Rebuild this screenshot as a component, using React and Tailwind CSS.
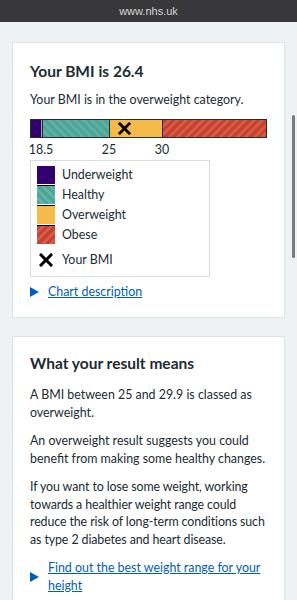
import React from 'react';

const swatches = [
  { label: 'Underweight', cls: 'bg-[#330072]' },
  { label: 'Healthy', cls: 'bg-[repeating-linear-gradient(45deg,#4ca597_0px,#4ca597_3px,#64b3a7_3px,#64b3a7_6px)]' },
  { label: 'Overweight', cls: 'bg-[#f5bb4a]' },
  { label: 'Obese', cls: 'bg-[repeating-linear-gradient(135deg,#c8402e_0px,#c8402e_3px,#d85c4b_3px,#d85c4b_6px)]' },
];

const Cross = ({ size = 14 }) => (
  <svg width={size} height={size} viewBox="0 0 14 14">
    <path d="M2 2 L12 12 M12 2 L2 12" stroke="#000" strokeWidth="3" strokeLinecap="square" />
  </svg>
);

const Triangle = () => (
  <svg width="9" height="10" viewBox="0 0 9 10" className="shrink-0">
    <path d="M0 0 L9 5 L0 10 Z" fill="#005eb8" />
  </svg>
);

const App = () => {
  return (
    <div className="relative min-h-[600px] bg-[#eef2f3] font-['Lato',sans-serif] text-[#212b32] overflow-hidden">
      <div className="h-[22px] bg-[#38383a] flex items-center justify-center text-[11px] text-[#d6d6d6] font-['Liberation_Sans',sans-serif]">
        www.nhs.uk
      </div>

      <div className="absolute left-[292px] top-[115px] w-[3px] h-[143px] rounded-full bg-[#7a7a7a]" />

      <div className="px-3 pt-[20px]">
        <div className="bg-white border border-[#dde2e4] px-[17px] pt-[17px] pb-[16px]">
          <h2 className="text-[15.5px] leading-[22px] font-bold">Your BMI is 26.4</h2>
          <p className="mt-[9px] text-[12.4px] leading-[18px]">Your BMI is in the overweight category.</p>

          <div className="mt-[10px] h-[19px] flex border border-[#2b2b2b]">
            <div className="w-[10px] bg-[#330072]" />
            <div className="w-[2px] bg-[#9aa0a3] border-r border-[#2b2b2b]" />
            <div className="w-[67px] border-r border-[#2b2b2b] bg-[repeating-linear-gradient(45deg,#4ca597_0px,#4ca597_3px,#5fb0a4_3px,#5fb0a4_6px)]" />
            <div className="relative w-[53px] border-r border-[#2b2b2b] bg-[#f5bb4a] flex items-center">
              <div className="absolute left-[8px]">
                <Cross size={13} />
              </div>
            </div>
            <div className="flex-1 bg-[repeating-linear-gradient(135deg,#c8402e_0px,#c8402e_3px,#d55a48_3px,#d55a48_6px)]" />
          </div>

          <div className="relative mt-[4px] h-[16px] text-[12.4px] leading-[16px]">
            <span className="absolute left-[11px] -translate-x-1/2">18.5</span>
            <span className="absolute left-[79px] -translate-x-1/2">25</span>
            <span className="absolute left-[132px] -translate-x-1/2">30</span>
          </div>

          <div className="mt-[2px] w-[180px] border border-[#d8dde0] pl-[6px] pt-[5px] pb-[7px]">
            {swatches.map((s, i) => (
              <div key={s.label} className={`flex items-center gap-[7px] ${i > 0 ? 'mt-[1px]' : ''}`}>
                <div className={`w-[18px] ${i > 0 ? 'h-[19px] border-t border-black' : 'h-[18px]'} ${s.cls}`} />
                <span className="text-[12.4px] leading-[18px]">{s.label}</span>
              </div>
            ))}
            <div className="mt-[7px] flex items-center gap-[7px]">
              <div className="w-[18px] flex justify-center">
                <Cross size={14} />
              </div>
              <span className="text-[12.4px] leading-[18px]">Your BMI</span>
            </div>
          </div>

          <div className="mt-[6px] flex items-center gap-[9px]">
            <Triangle />
            <a href="#" className="text-[12.4px] leading-[18px] text-[#005eb8] underline">Chart description</a>
          </div>
        </div>

        <div className="mt-[18px] bg-white border border-[#dde2e4] px-[17px] pt-[15px] pb-[16px]">
          <h2 className="text-[15.5px] leading-[22px] font-bold">What your result means</h2>
          <div className="mt-[12px] text-[12.4px] leading-[17.5px] flex flex-col gap-[11px]">
            <p>A BMI between 25 and 29.9 is classed as overweight.</p>
            <p>An overweight result suggests you could benefit from making some healthy changes.</p>
            <p className="tracking-[-0.1px]">If you want to lose some weight, working towards a healthier weight range could reduce the risk of long-term conditions such as type 2 diabetes and heart disease.</p>
            <div className="flex items-center gap-[9px]">
              <Triangle />
              <a href="#" className="text-[#005eb8] underline">Find out the best weight range for your height</a>
            </div>
          </div>
        </div>
      </div>
    </div>
  );
};

export default App;
